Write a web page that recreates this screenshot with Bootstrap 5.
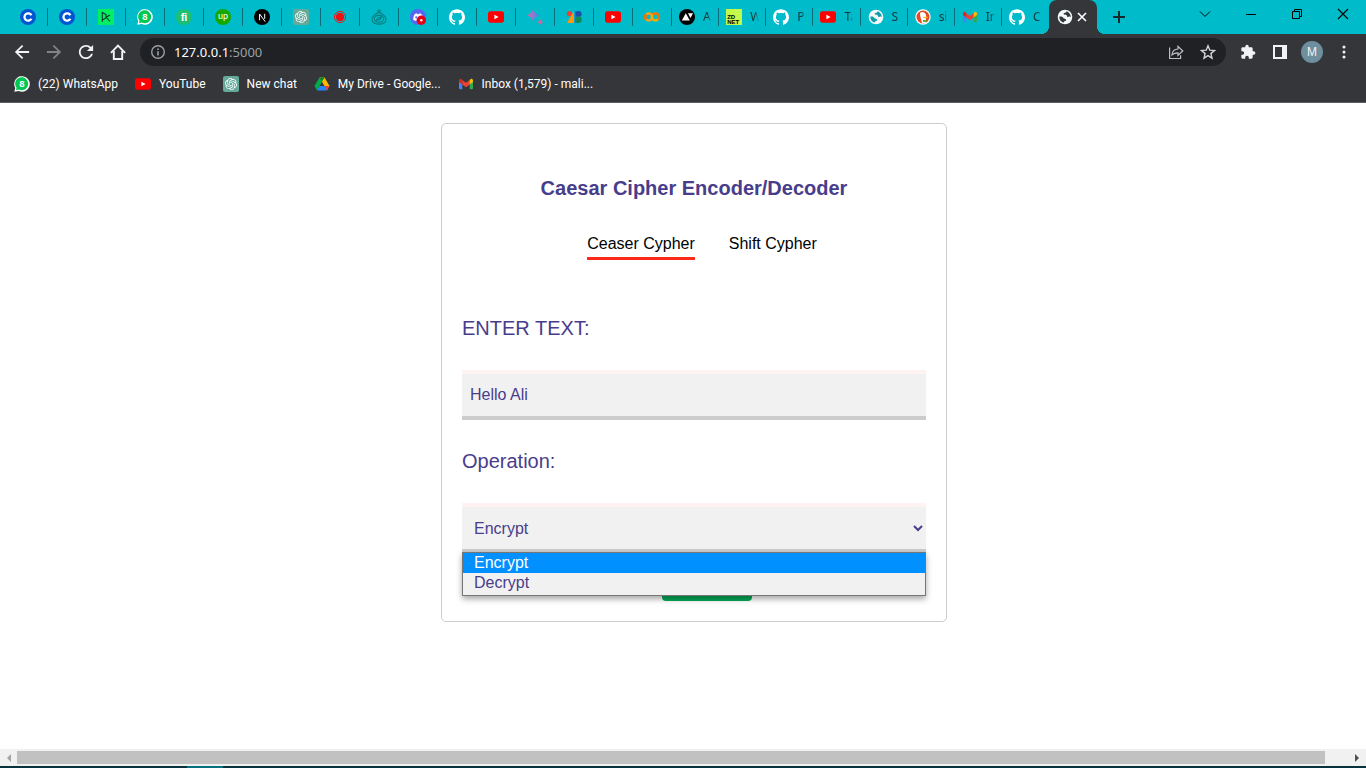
<!DOCTYPE html>
<html lang="en">
<head>
<meta charset="utf-8">
<meta name="viewport" content="width=device-width, initial-scale=1">
<title>Caesar Cipher Encoder/Decoder</title>
<link href="https://cdn.jsdelivr.net/npm/bootstrap@5.3.0/dist/css/bootstrap.min.css" rel="stylesheet">
<style>
:root { --teal:#00bbc9; --bar:#35363a; --ink:#483d8b; }
body { font-family:"Liberation Sans",Arial,sans-serif; font-size:16px; background:#fff; }
button { border:0; background:none; padding:0; color:inherit; }
svg { display:block; flex:none; }
.ui-text { font-family:"Noto Sans","Open Sans",sans-serif; font-size:12px; line-height:16px; }

/* tab strip */
.tab-strip { background:var(--teal); height:34px; padding-left:9px; }
.tab-item { height:18px; border-right:1px solid #0b6e78; color:#14383c; text-decoration:none; }
.tab-pin { width:39px; padding-left:11px; flex:none; }
.tab-group { width:377px; flex:none; }
.tab-wide { flex:1 1 0; min-width:0; padding-left:7px; gap:8px; }
.tab-wide span { width:9px; flex:none; white-space:nowrap;
  -webkit-mask-image:linear-gradient(90deg,#000 50%,transparent); mask-image:linear-gradient(90deg,#000 50%,transparent); }
.tab-last { border-right-color:transparent; }
.tab-active { position:relative; width:48px; height:34px; padding-left:8px; gap:2px; background:var(--bar); border-radius:8px 8px 0 0; color:#fff; flex:none; }
.tab-active::before,.tab-active::after { content:""; position:absolute; bottom:0; width:8px; height:8px; }
.tab-active::before { right:100%; background:radial-gradient(circle at 0 0,transparent 8px,var(--bar) 8px); }
.tab-active::after { left:100%; background:radial-gradient(circle at 100% 0,transparent 8px,var(--bar) 8px); }
.new-tab { width:44px; height:34px; }
.win-btn { width:46px; height:28px; }

/* toolbar */
.tool-bar { background:var(--bar); height:36px; padding:0 6px; color:#f1f3f4; }
.tool-btn { width:32px; height:32px; flex:none; }
.address { height:28px; margin:0 6px; padding:0 2px 0 10px; gap:8px; border-radius:14px; background:#202124; min-width:0; }
.address a { font-family:"Noto Sans","Open Sans",sans-serif; font-size:13px; line-height:20px; color:#fff; }
.address a span { color:#9aa0a6; }
.avatar { width:22px; height:22px; border-radius:50%; background:#6e8f9e; font-size:12px; line-height:22px; }
.bookmarks { background:var(--bar); height:33px; padding:0 14px 4px; gap:17px; border-bottom:1px solid #5c5d61; }
.bookmarks a { color:#fff; gap:8px; white-space:nowrap; font-family:Roboto,sans-serif; }

/* page */
.page-view { padding:20px 0 0 22px; }
.cipher-card { width:506px; max-width:100%; padding:20px; border:1px solid #ccc; border-radius:5px; }
.cipher-title { margin:31px 0 30px; font-size:20px; line-height:26px; font-weight:700; color:var(--ink); }
.cipher-nav { gap:34px; margin-bottom:53px; }
.cipher-nav a { line-height:26px; color:#000; border-bottom:3px solid transparent; }
.cipher-nav a.current { border-color:#ff2a1a; }
.cipher-card label { display:block; margin-bottom:27px; font-size:20px; line-height:30px; color:var(--ink); }
.field { display:block; width:100%; height:50px; padding:0 8px; font-size:16px; color:var(--ink); background-color:#f1f1f1;
  border:0; border-top:4px solid #fff2f2; border-bottom:4px solid #ccc; border-radius:0; outline:0; }
.field-group + .field-group { margin-top:26px; }
.option-list { position:absolute; top:calc(100% - 1px); left:0; right:0; z-index:2; border:1px solid #767676; background:#f1f1f1; color:var(--ink); box-shadow:0 3px 6px rgba(0,0,0,.35); }
.option-list li { padding-left:11px; line-height:20px; }
.option-list li:first-child { background:#0090ff; color:#fff; }
.option-list { padding-bottom:2px; }
.send-btn { width:90px; height:40px; margin:8px 0 0 200px; border-radius:4px; background:#04aa57; }
select.field { padding:0 1px 0 8px; }
.scroll-track { height:17px; background:#f1f1f1; padding:2px 0; }
.scroll-track button { width:17px; flex:none; }
.scroll-thumb { background:#c1c1c1; margin-right:24px; height:13px; }
.desk-edge { height:2px; background:#07343c; padding-left:187px; }
.desk-edge div { width:36px; height:2px; background:#04717e; }
</style>
</head>
<body class="vh-100 d-flex flex-column overflow-hidden">

<svg width="0" height="0" class="position-absolute" aria-hidden="true">
<defs>
<symbol id="coursera" viewBox="0 0 16 16"><circle cx="8" cy="8" r="8" fill="#0056d2"/><path d="M11.4 6.2A3.7 3.7 0 1 0 11.4 9.8" fill="none" stroke="#fff" stroke-width="2.3"/></symbol>
<symbol id="datacamp" viewBox="0 0 16 16"><path fill="#03ef62" d="M0 0h16v16H0z"/><path d="M4.3 12.8V3.4L8 5.5V9L4.3 11M12 6 8 8.2l4 4.3" fill="none" stroke="#0a3a2c" stroke-width="1.1"/></symbol>
<symbol id="whatsapp" viewBox="0 0 16 16"><path d="M.3 15.8 1.3 12A7.8 7.8 0 1 1 4.6 15z" fill="#fff"/><path d="M1.9 14.2 2.6 11.8A6.5 6.5 0 1 1 4.7 13.5z" fill="#00c853"/><text x="8" y="11.4" text-anchor="middle" font-size="9.5" font-weight="700" fill="#fff" font-family="Liberation Sans,sans-serif">8</text></symbol>
<symbol id="fiverr" viewBox="0 0 16 16"><circle cx="8" cy="8" r="8" fill="#1dbf73"/><text x="8" y="11.6" text-anchor="middle" font-size="11" font-weight="700" fill="#fff" font-family="Liberation Sans,sans-serif">fi</text></symbol>
<symbol id="upwork" viewBox="0 0 16 16"><circle cx="8" cy="8" r="8" fill="#14a800"/><text x="8" y="10.4" text-anchor="middle" font-size="9" fill="#fff" font-family="Lato,sans-serif">up</text></symbol>
<symbol id="next" viewBox="0 0 16 16"><circle cx="8" cy="8" r="8"/><path d="M5.6 11.3V5l5.6 7.6M10.7 4.8v5" fill="none" stroke="#fff" stroke-width="1"/></symbol>
<symbol id="openai" viewBox="0 0 24 24"><rect width="24" height="24" rx="3" fill="#65a99a"/><g transform="translate(3 3) scale(.75)"><path fill="#fff" d="M22.2819 9.8211a5.9847 5.9847 0 0 0-.5157-4.9108 6.0462 6.0462 0 0 0-6.5098-2.9A6.0651 6.0651 0 0 0 4.9807 4.1818a5.9847 5.9847 0 0 0-3.9977 2.9 6.0462 6.0462 0 0 0 .7427 7.0966 5.98 5.98 0 0 0 .511 4.9107 6.051 6.051 0 0 0 6.5146 2.9001A5.9847 5.9847 0 0 0 13.2599 24a6.0557 6.0557 0 0 0 5.7718-4.2058 5.9894 5.9894 0 0 0 3.9977-2.9001 6.0557 6.0557 0 0 0-.7475-7.0729zm-9.022 12.6081a4.4755 4.4755 0 0 1-2.8764-1.0408l.1419-.0804 4.7783-2.7582a.7948.7948 0 0 0 .3927-.6813v-6.7369l2.02 1.1686a.071.071 0 0 1 .038.052v5.5826a4.504 4.504 0 0 1-4.4945 4.4944zm-9.6607-4.1254a4.4708 4.4708 0 0 1-.5346-3.0137l.142.0852 4.783 2.7582a.7712.7712 0 0 0 .7806 0l5.8428-3.3685v2.3324a.0804.0804 0 0 1-.0332.0615L9.74 19.9502a4.4992 4.4992 0 0 1-6.1408-1.6464zM2.3408 7.8956a4.485 4.485 0 0 1 2.3655-1.9728V11.6a.7664.7664 0 0 0 .3879.6765l5.8144 3.3543-2.0201 1.1685a.0757.0757 0 0 1-.071 0l-4.8303-2.7865A4.504 4.504 0 0 1 2.3408 7.872zm16.5963 3.8558L13.1038 8.364 15.1192 7.2a.0757.0757 0 0 1 .071 0l4.8303 2.7913a4.4944 4.4944 0 0 1-.6765 8.1042v-5.6772a.79.79 0 0 0-.407-.667zm2.0107-3.0231l-.142-.0852-4.7735-2.7818a.7759.7759 0 0 0-.7854 0L9.409 9.2297V6.8974a.0662.0662 0 0 1 .0284-.0615l4.8303-2.7866a4.4992 4.4992 0 0 1 6.6802 4.66zM8.3065 12.863l-2.02-1.1638a.0804.0804 0 0 1-.038-.0567V6.0742a4.4992 4.4992 0 0 1 7.3757-3.4537l-.142.0805L8.704 5.459a.7948.7948 0 0 0-.3927.6813zm1.0976-2.3654l2.602-1.4998 2.6069 1.4998v2.9994l-2.5974 1.4997-2.6067-1.4997Z"/></g></symbol>
<symbol id="record" viewBox="0 0 16 16"><circle cx="8" cy="8" r="5.6" fill="none" stroke="#f01010" stroke-width=".9"/><circle cx="8" cy="8" r="4.200" fill="#f01010"/></symbol>
<symbol id="compass" viewBox="0 0 16 16"><g fill="none" stroke="#087c7f" stroke-width="1.1"><circle cx="8" cy="2" r="1.2"/><path d="M7 3.6C5 5.4 1 6.6 1 10.2c0 6.6 14 6.6 14 0C15 6.6 11 5.4 9 3.6z"/><ellipse cx="8" cy="9.8" rx="4.8" ry="3.4"/><path d="M5.5 11.2 7.2 9l3.4-1-1.7 2.4z"/></g></symbol>
<symbol id="discord" viewBox="0 0 16 16"><circle cx="8" cy="8" r="8" fill="#5865f2"/><path d="M3.2 11c0-3 .7-5 1.7-6l2-.7.6.9h1.2l.6-.9 2 .7c1 1 1.7 3 1.7 6l-2.4 1-5.2-.3z" fill="#fff"/><circle cx="6.3" cy="8.3" r="1.1" fill="#5865f2"/><circle cx="11.3" cy="11.3" r="4.7" fill="#e60012"/><circle cx="11.3" cy="11.3" r="1.2" fill="#fff"/></symbol>
<symbol id="github" viewBox="0 0 24 24"><path fill="#fff" d="M12 .297c-6.63 0-12 5.373-12 12 0 5.303 3.438 9.8 8.205 11.385.6.113.82-.258.82-.577 0-.285-.01-1.04-.015-2.04-3.338.724-4.042-1.61-4.042-1.61C4.422 18.07 3.633 17.7 3.633 17.7c-1.087-.744.084-.729.084-.729 1.205.084 1.838 1.236 1.838 1.236 1.07 1.835 2.809 1.305 3.495.998.108-.776.417-1.305.76-1.605-2.665-.3-5.466-1.332-5.466-5.93 0-1.31.465-2.38 1.235-3.22-.135-.303-.54-1.523.105-3.176 0 0 1.005-.322 3.3 1.23.96-.267 1.98-.399 3-.405 1.02.006 2.04.138 3 .405 2.28-1.552 3.285-1.23 3.285-1.23.645 1.653.24 2.873.12 3.176.765.84 1.23 1.91 1.23 3.22 0 4.61-2.805 5.625-5.475 5.92.42.36.81 1.096.81 2.22 0 1.606-.015 2.896-.015 3.286 0 .315.21.69.825.57C20.565 22.092 24 17.592 24 12.297c0-6.627-5.373-12-12-12"/></symbol>
<symbol id="youtube" viewBox="0 0 16 16"><rect y="2.3" width="16" height="11.4" rx="2.6" fill="#f00"/><path d="m6.4 5.8 4.2 2.2-4.2 2.2z" fill="#fff"/></symbol>
<symbol id="blocks" viewBox="0 0 16 16"><circle cx="3.4" cy="4.600" r="2.700" fill="#ea4335"/><path d="M7.800 2v12H1z" fill="#fb9a0a"/><path d="M5.500 7h2.300v7H1.600z" fill="#fb9a0a"/><path d="M8.600 2H12v12H8.600z" fill="#1a6fe0"/><circle cx="12.700" cy="4.900" r="2.900" fill="#174ea6"/><circle cx="12.400" cy="10.700" r="3.300" fill="#108a50"/></symbol>
<symbol id="colab" viewBox="0 0 16 16"><g fill="none" stroke-width="2.5"><circle cx="4.7" cy="8" r="3.5" stroke="#f0a020"/><circle cx="11.3" cy="8" r="3.5" stroke="#f9ab00"/><path d="M8.8 5.5a3.5 3.5 0 0 1 5 5" stroke="#e8710a"/><path d="M2.2 10.5a3.5 3.5 0 0 1 0-5" stroke="#e8710a"/></g></symbol>
<symbol id="triangles" viewBox="0 0 16 16"><circle cx="8" cy="8" r="8"/><path d="m2.8 11.5 4-7.3 4 7.3zM9 4.2h5L11.5 9z" fill="#fff"/></symbol>
<symbol id="zdnet" viewBox="0 0 16 16"><path fill="#c3f94a" d="M0 0h16v16H0z"/><g font-family="Liberation Sans,sans-serif" font-size="6" font-weight="700"><text x="1.2" y="10.2">ZD</text><text x="1.2" y="15">NET</text></g></symbol>
<symbol id="globe" viewBox="0 0 16 16"><circle cx="8" cy="8" r="7.300" fill="#f4f8f9"/><path d="M9.400 2.300C9.800 3.600 8.400 4 7.300 4c-1 .1-.8 1.300-.1 1.600 1 .4 2.600 0 2.700 1.300.1.900 1 1.200 1.800.9.900-.4 1.700-.1 2.100.4C13.700 5.300 12 3 9.400 2.300zM2.300 7.600c-.2 3 1.600 5.400 4.400 6.100-.1-1 .5-1.500 1.500-1.700 1.200-.3 1.200-1.700.2-2.100-.7-.3-1.600 0-2-.8-.5-1.100-1.300-1.500-4.100-1.500z" fill="currentColor"/></symbol>
<symbol id="duck" viewBox="0 0 16 16"><circle cx="8" cy="8" r="7.700" fill="#fff"/><circle cx="8" cy="8" r="6.500" fill="#e34a25"/><path d="M5 4c2-2 6-.5 6.200 3.200.2 1.800-.8 2.800 0 6.300-1.500.8-3.200.8-4.200.5L5.200 7z" fill="#fff"/><path d="M8.300 7.800h4.200v1.300H8.300z" fill="#fdb813"/><path d="M8 11h3.500v2H8z" fill="#4cba3c"/></symbol>
<symbol id="gmail" viewBox="0 0 16 16"><path d="M1 5h3.300v8.300H2a1 1 0 0 1-1-1z" fill="#4285f4"/><path d="M15 5h-3.300v8.300H14a1 1 0 0 0 1-1z" fill="#34a853"/><path d="M4.200 8.400V3.900L8 6.700l3.800-2.800v4.500L8 11.300z" fill="#ea4335"/><path d="M1 4.700V6l3.300 2.500V3.900L3.300 3C2.200 2.200 1 3.200 1 4.700z" fill="#d42a20"/><path d="M15 4.700V6l-3.300 2.500V3.900l1-.9c1.100-.8 2.300.2 2.300 1.700z" fill="#fbbc04"/></symbol>
<symbol id="drive" viewBox="0 0 16 16"><path d="M5.500 1.500h5L15.500 10h-5z" fill="#ffba00"/><path d="M5.500 1.500 8 5.800 3 14.500.5 10z" fill="#00ac47"/><path d="M5.600 10h9.900L13 14.500H3z" fill="#2684fc"/><path d="m10.500 10 2.500 4.500 2.500-4.500z" fill="#ea4335"/><path d="M5.500 1.500h5L8 5.800z" fill="#00832d"/></symbol>
</defs>
</svg>

<header>
  <nav class="tab-strip d-flex align-items-center ui-text" aria-label="Tabs">
    <a href="#" class="tab-item tab-pin d-flex align-items-center" aria-label="Coursera"><svg width="16" height="16"><use href="#coursera"/></svg></a>
    <a href="#" class="tab-item tab-pin d-flex align-items-center" aria-label="Coursera"><svg width="16" height="16"><use href="#coursera"/></svg></a>
    <a href="#" class="tab-item tab-pin d-flex align-items-center" aria-label="DataCamp"><svg width="16" height="16"><use href="#datacamp"/></svg></a>
    <a href="#" class="tab-item tab-pin d-flex align-items-center" aria-label="WhatsApp"><svg width="16" height="16"><use href="#whatsapp"/></svg></a>
    <a href="#" class="tab-item tab-pin d-flex align-items-center" aria-label="Fiverr"><svg width="16" height="16"><use href="#fiverr"/></svg></a>
    <a href="#" class="tab-item tab-pin d-flex align-items-center" aria-label="Upwork"><svg width="16" height="16"><use href="#upwork"/></svg></a>
    <a href="#" class="tab-item tab-pin d-flex align-items-center" aria-label="Next.js"><svg width="16" height="16"><use href="#next"/></svg></a>
    <a href="#" class="tab-item tab-pin d-flex align-items-center" aria-label="New chat"><svg width="16" height="16"><use href="#openai"/></svg></a>
    <a href="#" class="tab-item tab-pin d-flex align-items-center" aria-label="Recorder"><svg width="16" height="16"><use href="#record"/></svg></a>
    <a href="#" class="tab-item tab-pin d-flex align-items-center" aria-label="Compass"><svg width="16" height="16"><use href="#compass"/></svg></a>
    <a href="#" class="tab-item tab-pin d-flex align-items-center" aria-label="Discord"><svg width="16" height="16"><use href="#discord"/></svg></a>
    <a href="#" class="tab-item tab-pin d-flex align-items-center" aria-label="GitHub"><svg width="16" height="16"><use href="#github"/></svg></a>
    <a href="#" class="tab-item tab-pin d-flex align-items-center" aria-label="YouTube"><svg width="16" height="16"><use href="#youtube"/></svg></a>
    <a href="#" class="tab-item tab-pin d-flex align-items-center" aria-label="Assistant"><svg width="16" height="16" viewBox="0 0 16 16"><linearGradient id="spark"><stop stop-color="#f0609a"/><stop offset=".5" stop-color="#8a7ad8"/><stop offset="1" stop-color="#2f8fe0"/></linearGradient><path d="M6 0Q7 4.800 13 6.200 7.200 7.400 6 12.600 4.800 7.400 0 6.200 5 4.800 6 0z" fill="url(#spark)"/><path d="M13.200 10.200q.5 2.200 2.800 3-2.300.6-2.800 2.800-.5-2.200-2.800-2.800 2.300-.8 2.800-3z" fill="#e0609c"/></svg></a>
    <a href="#" class="tab-item tab-pin d-flex align-items-center" aria-label="Blocks"><svg width="16" height="16"><use href="#blocks"/></svg></a>
    <a href="#" class="tab-item tab-pin d-flex align-items-center" aria-label="YouTube"><svg width="16" height="16"><use href="#youtube"/></svg></a>
    <a href="#" class="tab-item tab-pin d-flex align-items-center" aria-label="Colab"><svg width="16" height="16"><use href="#colab"/></svg></a>
    <div class="tab-group d-flex align-items-center">
      <a href="#" class="tab-item tab-wide d-flex align-items-center"><svg width="16" height="16"><use href="#triangles"/></svg><span>A</span></a>
      <a href="#" class="tab-item tab-wide d-flex align-items-center"><svg width="16" height="16"><use href="#zdnet"/></svg><span>W</span></a>
      <a href="#" class="tab-item tab-wide d-flex align-items-center"><svg width="16" height="16"><use href="#github"/></svg><span>Pa</span></a>
      <a href="#" class="tab-item tab-wide d-flex align-items-center"><svg width="16" height="16"><use href="#youtube"/></svg><span>Ta</span></a>
      <a href="#" class="tab-item tab-wide d-flex align-items-center"><svg width="16" height="16" color="#0a9eaa"><use href="#globe"/></svg><span>S</span></a>
      <a href="#" class="tab-item tab-wide d-flex align-items-center"><svg width="16" height="16"><use href="#duck"/></svg><span>si</span></a>
      <a href="#" class="tab-item tab-wide d-flex align-items-center"><svg width="16" height="16"><use href="#gmail"/></svg><span>In</span></a>
      <a href="#" class="tab-item tab-wide tab-last d-flex align-items-center"><svg width="16" height="16"><use href="#github"/></svg><span>C</span></a>
    </div>
    <div class="tab-active d-flex align-items-center">
      <svg width="16" height="16" color="#35363a"><use href="#globe"/></svg>
      <button type="button" aria-label="Close tab"><svg width="14" height="14" viewBox="0 0 14 14"><path d="m3 3 8 8m0-8-8 8" stroke="#fff" stroke-width="1.600"/></svg></button>
    </div>
    <button type="button" class="new-tab d-flex align-items-center justify-content-center" aria-label="New tab"><svg width="14" height="14" viewBox="0 0 14 14"><path d="M7 1v12M1 7h12" stroke="#17292b" stroke-width="2"/></svg></button>
    <div class="d-flex ms-auto align-self-start">
      <button type="button" class="win-btn d-flex align-items-center justify-content-center" aria-label="Search tabs"><svg width="12" height="12" viewBox="0 0 12 12"><path d="m1 3.500 5 5 5-5" fill="none" stroke="#000"/></svg></button>
      <button type="button" class="win-btn d-flex align-items-center justify-content-center" aria-label="Minimize"><svg width="10" height="10" viewBox="0 0 10 10"><path d="M0 5.500h10" stroke="#000"/></svg></button>
      <button type="button" class="win-btn d-flex align-items-center justify-content-center" aria-label="Restore"><svg width="10" height="10" viewBox="0 0 10 10"><path d="M.5 2.500h7v7h-7zM2.500 2.500v-2h7v7h-2" fill="none" stroke="#000"/></svg></button>
      <button type="button" class="win-btn d-flex align-items-center justify-content-center" aria-label="Close"><svg width="12" height="12" viewBox="0 0 12 12"><path d="m1 1 10 10m0-10L1 11" stroke="#000" stroke-width="1.100"/></svg></button>
    </div>
  </nav>

  <div class="tool-bar d-flex align-items-center">
    <button type="button" class="tool-btn d-flex align-items-center justify-content-center" aria-label="Back"><svg width="16" height="16" viewBox="3 3 18 18" fill="currentColor"><path d="M20 11H7.830l5.590-5.590L12 4l-8 8 8 8 1.410-1.410L7.830 13H20v-2z"/></svg></button>
    <button type="button" class="tool-btn d-flex align-items-center justify-content-center" aria-label="Forward"><svg width="16" height="16" viewBox="3 3 18 18" fill="#828386"><path d="m12 4-1.410 1.410L16.170 11H4v2h12.170l-5.580 5.590L12 20l8-8z"/></svg></button>
    <button type="button" class="tool-btn d-flex align-items-center justify-content-center" aria-label="Reload"><svg width="16" height="16" viewBox="3 3 18 18" fill="currentColor"><path d="M17.650 6.350C16.200 4.900 14.210 4 12 4c-4.420 0-7.990 3.580-7.990 8s3.570 8 7.990 8c3.730 0 6.840-2.550 7.730-6h-2.080c-.82 2.330-3.040 4-5.650 4-3.310 0-6-2.690-6-6s2.690-6 6-6c1.660 0 3.140.69 4.220 1.780L13 11h7V4l-2.350 2.350z"/></svg></button>
    <button type="button" class="tool-btn d-flex align-items-center justify-content-center" aria-label="Home"><svg width="16" height="16" viewBox="0 0 16 16"><path d="M.9 8.800 8 1.700l7.100 7.100M3.800 7v8h8.400V7" fill="none" stroke="currentColor" stroke-width="1.900"/></svg></button>
    <div class="address d-flex align-items-center flex-grow-1">
      <svg width="16" height="16" viewBox="0 0 16 16" fill="none" stroke="#9aa0a6" stroke-width="1.400"><circle cx="8" cy="8" r="6.300"/><path d="M8 7.200v4.300M8 4.400v1.500" stroke-width="1.600"/></svg>
      <a href="#" class="text-decoration-none flex-grow-1">127.0.0.1<span>:5000</span></a>
      <div class="d-flex">
        <button type="button" class="tool-btn d-flex align-items-center justify-content-center" aria-label="Share"><svg width="16" height="16" viewBox="0 0 16 16" fill="none" stroke="#bdc1c6" stroke-width="1.200"><path d="M1.600 3.500v11h11v-3.200M4 10.800c.3-3.600 2.500-5.600 6-5.800V2.400L14.800 7 10 11.300V8.800c-2.700 0-4.500.5-6 2z"/></svg></button>
        <button type="button" class="tool-btn d-flex align-items-center justify-content-center" aria-label="Bookmark this tab"><svg width="16" height="16" viewBox="0 0 16 16" fill="none" stroke="#d0d3d7" stroke-width="1.400"><path d="m8 1.800 1.800 4.400 4.700.3-3.600 3.100 1.100 4.600L8 11.700l-4 2.500 1.100-4.600-3.600-3.100 4.700-.3z"/></svg></button>
      </div>
    </div>
    <button type="button" class="tool-btn d-flex align-items-center justify-content-center" aria-label="Extensions"><svg width="16" height="16" viewBox="0 0 24 24" fill="currentColor"><path d="M20.500 11H19V7c0-1.100-.9-2-2-2h-4V3.500C13 2.120 11.880 1 10.500 1S8 2.120 8 3.500V5H4c-1.100 0-1.990.9-1.990 2v3.800H3.500c1.490 0 2.700 1.210 2.700 2.700s-1.210 2.700-2.700 2.700H2V20c0 1.100.9 2 2 2h3.800v-1.500c0-1.490 1.210-2.700 2.700-2.700 1.490 0 2.700 1.210 2.700 2.700V22H17c1.100 0 2-.9 2-2v-4h1.500c1.380 0 2.500-1.120 2.500-2.500S21.880 11 20.500 11z"/></svg></button>
    <button type="button" class="tool-btn d-flex align-items-center justify-content-center" aria-label="Side panel"><svg width="14" height="14" viewBox="0 0 14 14"><path fill="#f1f3f4" fill-rule="evenodd" d="M0 0h14v14H0zM2 2v10h7V2z"/></svg></button>
    <button type="button" class="tool-btn d-flex align-items-center justify-content-center" aria-label="Profile"><span class="avatar">M</span></button>
    <button type="button" class="tool-btn d-flex align-items-center justify-content-center" aria-label="Menu"><svg width="4" height="14" viewBox="0 0 4 14" fill="currentColor"><circle cx="2" cy="2" r="1.500"/><circle cx="2" cy="7" r="1.500"/><circle cx="2" cy="12" r="1.500"/></svg></button>
  </div>

  <nav class="bookmarks d-flex align-items-center ui-text" aria-label="Bookmarks">
    <a href="#" class="d-flex align-items-center text-decoration-none"><svg width="16" height="16"><use href="#whatsapp"/></svg>(22) WhatsApp</a>
    <a href="#" class="d-flex align-items-center text-decoration-none"><svg width="16" height="16"><use href="#youtube"/></svg>YouTube</a>
    <a href="#" class="d-flex align-items-center text-decoration-none"><svg width="16" height="16"><use href="#openai"/></svg>New chat</a>
    <a href="#" class="d-flex align-items-center text-decoration-none"><svg width="16" height="16"><use href="#drive"/></svg>My Drive - Google...</a>
    <a href="#" class="d-flex align-items-center text-decoration-none"><svg width="16" height="16"><use href="#gmail"/></svg>Inbox (1,579) - mali...</a>
  </nav>
</header>

<main class="page-view flex-grow-1 overflow-hidden">
  <form class="cipher-card mx-auto">
    <h1 class="cipher-title text-center">Caesar Cipher Encoder/Decoder</h1>
    <nav class="cipher-nav d-flex justify-content-center ps-3">
      <a href="#" class="current text-decoration-none">Ceaser Cypher</a>
      <a href="#" class="text-decoration-none">Shift Cypher</a>
    </nav>
    <div class="field-group">
      <label for="message">ENTER TEXT:</label>
      <input type="text" id="message" class="field" value="Hello Ali">
    </div>
    <div class="field-group">
      <label for="operation">Operation:</label>
      <div class="position-relative">
        <select id="operation" class="field"><option selected>Encrypt</option><option>Decrypt</option></select>
        <ul class="option-list list-unstyled mb-0"><li>Encrypt</li><li>Decrypt</li></ul>
      </div>
    </div>
    <button type="submit" class="send-btn d-block" aria-label="Submit"></button>
  </form>
</main>

<footer>
  <div class="scroll-track d-flex align-items-center">
    <button type="button" class="d-flex justify-content-center" aria-label="Scroll left"><svg width="5" height="8" viewBox="0 0 5 8"><path d="M5 0v8L1 4z" fill="#a3a3a3"/></svg></button>
    <div class="scroll-thumb flex-grow-1"></div>
    <button type="button" class="d-flex justify-content-center" aria-label="Scroll right"><svg width="5" height="8" viewBox="0 0 5 8"><path d="M0 0v8l4-4z" fill="#505050"/></svg></button>
  </div>
  <div class="desk-edge"><div></div></div>
</footer>

<script src="https://cdn.jsdelivr.net/npm/bootstrap@5.3.0/dist/js/bootstrap.bundle.min.js"></script>
</body>
</html>
